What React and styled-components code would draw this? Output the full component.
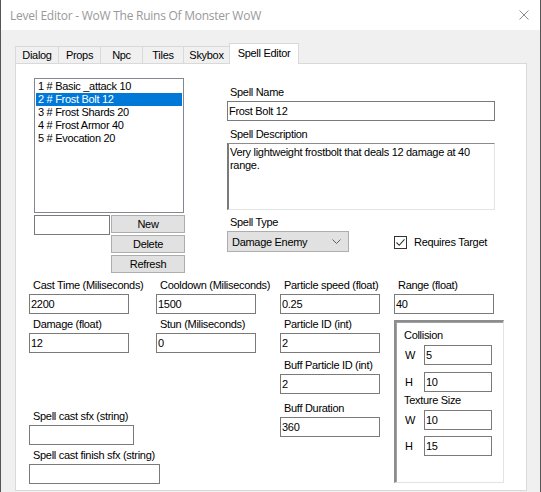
import React from 'react';
import styled, { createGlobalStyle } from 'styled-components';

const GlobalStyle = createGlobalStyle`
  html, body { margin: 0; padding: 0; background: #ffffff; }
  body {
    font-family: "Liberation Sans", Arial, sans-serif;
    font-size: 11px;
    letter-spacing: -0.3px;
    color: #000;
  }
  * { box-sizing: border-box; }
`;

const spells = [
  '1 # Basic _attack 10',
  '2 # Frost Bolt 12',
  '3 # Frost Shards 20',
  '4 # Frost Armor 40',
  '5 # Evocation 20',
];

const tabs = [
  { name: 'Dialog', width: 44 },
  { name: 'Props', width: 43 },
  { name: 'Npc', width: 43 },
  { name: 'Tiles', width: 42 },
  { name: 'Skybox', width: 47 },
  { name: 'Spell Editor', width: 70, active: true },
];

const Field = ({ label, value = '', width, mt }) => (
  <FieldWrap $mt={mt}>
    <Label>{label}</Label>
    <TextBox readOnly value={value} $width={width} />
  </FieldWrap>
);

const SizeRow = ({ label, value, mt }) => (
  <GroupRow $mt={mt}>
    <RowLabel>{label}</RowLabel>
    <TextBox readOnly value={value} $width={68} />
  </GroupRow>
);

export default function App() {
  return (
    <>
      <GlobalStyle />
      <Window>
        <TitleBar>
          <span>Level Editor - WoW The Ruins Of Monster WoW</span>
          <svg width="10" height="10" viewBox="0 0 10 10">
            <path d="M0.5 0.5 L9.5 9.5 M9.5 0.5 L0.5 9.5" stroke="#8c8c8c" strokeWidth="1" fill="none" />
          </svg>
        </TitleBar>
        <Body>
          <TabStrip>
            {tabs.map((t) => (
              <Tab key={t.name} $width={t.width} $active={t.active}>{t.name}</Tab>
            ))}
          </TabStrip>
          <Panel>
            <TopSection>
              <LeftCol>
                <ListBox>
                  {spells.map((s, i) => (
                    <ListItem key={s} $selected={i === 1}>{s}</ListItem>
                  ))}
                </ListBox>
                <ControlsRow>
                  <TextBox readOnly value="" $width={76} />
                  <ButtonStack>
                    <Button>New</Button>
                    <Button>Delete</Button>
                    <Button>Refresh</Button>
                  </ButtonStack>
                </ControlsRow>
              </LeftCol>
              <RightCol>
                <Label>Spell Name</Label>
                <TextBox readOnly value="Frost Bolt 12" $width={268} />
                <Label $mt={7}>Spell Description</Label>
                <TextArea>Very lightweight frostbolt that deals 12 damage at 40 range.</TextArea>
                <Label $mt={6}>Spell Type</Label>
                <ComboRow>
                  <Combo>
                    <span>Damage Enemy</span>
                    <svg width="9" height="5" viewBox="0 0 9 5">
                      <path d="M0.5 0.5 L4.5 4.5 L8.5 0.5" stroke="#606060" strokeWidth="1" fill="none" />
                    </svg>
                  </Combo>
                  <CheckWrap>
                    <CheckBox>
                      <svg width="11" height="11" viewBox="0 0 11 11">
                        <path d="M1.5 5.5 L4.2 8.3 L9.5 2.3" stroke="#333" strokeWidth="1.1" fill="none" />
                      </svg>
                    </CheckBox>
                    <span>Requires Target</span>
                  </CheckWrap>
                </ComboRow>
              </RightCol>
            </TopSection>

            <BottomGrid>
              <Column>
                <Field label="Cast Time (Miliseconds)" value="2200" />
                <Field label="Damage (float)" value="12" mt={4} />
                <Field label="Spell cast sfx (string)" width={105} mt={57} />
                <Field label="Spell cast finish sfx (string)" width={131} mt={4} />
              </Column>
              <Column>
                <Field label="Cooldown (Miliseconds)" value="1500" />
                <Field label="Stun (Miliseconds)" value="0" mt={4} />
              </Column>
              <Column>
                <Field label="Particle speed (float)" value="0.25" />
                <Field label="Particle ID (int)" value="2" mt={4} />
                <Field label="Buff Particle ID (int)" value="2" mt={6} />
                <Field label="Buff Duration" value="360" mt={8} />
              </Column>
              <Column>
                <Field label="Range (float)" value="40" />
                <SizeGroup>
                  <GroupLabel>Collision</GroupLabel>
                  <SizeRow label="W" value="5" mt={3} />
                  <SizeRow label="H" value="10" mt={7} />
                  <GroupLabel $mt={2}>Texture Size</GroupLabel>
                  <SizeRow label="W" value="10" mt={3} />
                  <SizeRow label="H" value="15" mt={6} />
                </SizeGroup>
              </Column>
            </BottomGrid>
          </Panel>
        </Body>
      </Window>
    </>
  );
}

const Window = styled.div`
  width: 541px;
  height: 492px;
  display: flex;
  flex-direction: column;
  background: #f0f0f0;
  border-left: 1px solid #555555;
  border-right: 1px solid #555555;
  overflow: hidden;
`;

const TitleBar = styled.div`
  height: 30px;
  flex-shrink: 0;
  display: flex;
  align-items: center;
  justify-content: space-between;
  padding: 0 11px 0 9px;
  background: #ffffff;
  font-family: "Open Sans", "Noto Sans", sans-serif;
  font-size: 12px;
  letter-spacing: -0.25px;
  color: #999999;
`;

const Body = styled.div`
  flex: 1;
  padding: 13px 0 0 14px;
`;

const TabStrip = styled.div`
  display: flex;
  align-items: flex-end;
  height: 20px;
`;

const Tab = styled.div`
  width: ${(p) => p.$width}px;
  height: ${(p) => (p.$active ? 21 : 17)}px;
  margin-left: -1px;
  margin-bottom: ${(p) => (p.$active ? -1 : 0)}px;
  &:first-child { margin-left: 0; }
  display: flex;
  align-items: center;
  justify-content: center;
  padding-bottom: ${(p) => (p.$active ? 2 : 0)}px;
  border: 1px solid #d9d9d9;
  border-bottom: none;
  background: ${(p) => (p.$active ? '#ffffff' : '#f0f0f0')};
  position: relative;
  z-index: ${(p) => (p.$active ? 1 : 0)};
  white-space: nowrap;
`;

const Panel = styled.div`
  width: 512px;
  height: 428px;
  border: 1px solid #d9d9d9;
  background: #ffffff;
  padding: 14px 0 0 13px;
`;

const TopSection = styled.div`
  display: flex;
  padding-left: 5px;
`;

const LeftCol = styled.div`
  width: 150px;
  display: flex;
  flex-direction: column;
`;

const ListBox = styled.div`
  height: 135px;
  border: 1px solid #828790;
  padding: 1px;
  background: #ffffff;
`;

const ListItem = styled.div`
  height: 13px;
  line-height: 13px;
  padding-left: 2px;
  white-space: nowrap;
  background: ${(p) => (p.$selected ? '#0078d7' : 'transparent')};
  color: ${(p) => (p.$selected ? '#ffffff' : '#000000')};
`;

const ControlsRow = styled.div`
  display: flex;
  align-items: flex-start;
  gap: 1px;
  margin-top: 2px;
`;

const ButtonStack = styled.div`
  display: flex;
  flex-direction: column;
  gap: 2px;
`;

const Button = styled.div`
  width: 74px;
  height: 18px;
  display: flex;
  align-items: center;
  justify-content: center;
  background: #e1e1e1;
  border: 1px solid #adadad;
`;

const RightCol = styled.div`
  width: 268px;
  margin-left: 43px;
  padding-top: 8px;
  display: flex;
  flex-direction: column;
`;

const Label = styled.div`
  height: 13px;
  line-height: 13px;
  padding-left: 3px;
  margin-top: ${(p) => p.$mt || 0}px;
  margin-bottom: 2px;
  white-space: nowrap;
`;

const TextBox = styled.input`
  display: block;
  width: ${(p) => p.$width || 100}px;
  height: 20px;
  margin: 0;
  padding: 0 1px;
  border: 1px solid #7a7a7a;
  border-radius: 0;
  outline: none;
  background: #ffffff;
  font: inherit;
  letter-spacing: inherit;
  color: #000;
`;

const TextArea = styled.div`
  width: 268px;
  height: 67px;
  padding: 2px 1px 0 1px;
  line-height: 13px;
  border-style: solid;
  border-width: 1px 1px 1px 2px;
  border-color: #8c8c8c #e3e3e3 #e3e3e3 #7a7a7a;
  background: #ffffff;
`;

const ComboRow = styled.div`
  display: flex;
  align-items: center;
`;

const Combo = styled.div`
  width: 122px;
  height: 21px;
  display: flex;
  align-items: center;
  justify-content: space-between;
  padding: 0 7px 0 4px;
  background: #e1e1e1;
  border: 1px solid #adadad;
`;

const CheckWrap = styled.div`
  display: flex;
  align-items: center;
  gap: 7px;
  margin-left: 45px;
  margin-top: 1px;
`;

const CheckBox = styled.div`
  width: 13px;
  height: 13px;
  border: 1px solid #333333;
  background: #ffffff;
  display: flex;
`;

const BottomGrid = styled.div`
  display: grid;
  grid-template-columns: 127px 124px 114px 1fr;
  margin-top: 6px;
`;

const Column = styled.div`
  display: flex;
  flex-direction: column;
  align-items: flex-start;
`;

const FieldWrap = styled.div`
  display: flex;
  flex-direction: column;
  margin-top: ${(p) => p.$mt || 0}px;
  & > div { padding-left: 4px; }
`;

const SizeGroup = styled.div`
  width: 110px;
  height: 163px;
  margin-top: 6px;
  padding: 7px 0 0 7px;
  border-style: solid;
  border-width: 2px 1px 1px 2px;
  border-color: #8c8c8c #e3e3e3 #e3e3e3 #8c8c8c;
  box-shadow: inset 1px 1px 0 #a0a0a0;
`;

const GroupLabel = styled.div`
  height: 13px;
  line-height: 13px;
  padding-left: 1px;
  margin-top: ${(p) => p.$mt || 0}px;
`;

const GroupRow = styled.div`
  display: flex;
  align-items: center;
  margin-top: ${(p) => p.$mt || 0}px;
`;

const RowLabel = styled.div`
  width: 21px;
  padding-left: 2px;
`;
